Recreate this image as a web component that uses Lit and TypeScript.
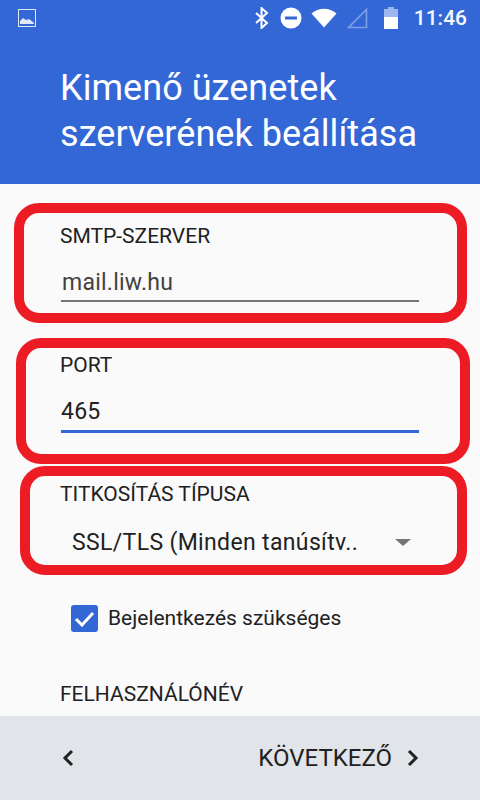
import { LitElement, html, css } from "lit";
import { customElement } from "lit/decorators.js";

@customElement("app-root")
export class AppRoot extends LitElement {
  static styles = css`
    :host { display: block; width: 480px; height: 800px; position: relative; overflow: hidden; background: #fafafa; font-family: Roboto, sans-serif; color: #212121; }
    .page { display: flex; flex-direction: column; height: 800px; }
    .header { height: 184px; box-sizing: border-box; background: #3367d6; color: #fff; display: flex; flex-direction: column; flex: none; }
    .status { height: 36px; display: flex; align-items: center; padding: 0 13px 0 18px; flex: none; }
    .status .spacer { flex: 1; }
    .status svg { display: block; flex: none; }
    .time { font-size: 21px; font-weight: 500; margin-left: 16px; color: #f5f7fd; }
    h1 { margin: 0; padding: 29px 0 0 60px; font-size: 36px; font-weight: 400; line-height: 46px; white-space: nowrap; letter-spacing: 0.05px; }
    .form { flex: 1; padding: 40px 60px 0 61px; min-height: 0; overflow: hidden; display: flex; flex-direction: column; }
    .label { font-size: 21px; line-height: 24px; color: #212121; height: 24px; white-space: nowrap; margin-left: -1px; }
    .value { font-size: 23px; line-height: 28px; height: 28px; padding-left: 1px; margin-top: 21px; color: #424242; letter-spacing: 0.25px; }
    .line { height: 2px; width: 358px; background: #757575; margin-top: 3px; }
    .port { margin-top: 51px; }
    .port .value { padding-left: 0; margin-top: 21px; color: #212121; font-size: 23px; }
    .port .line { height: 3px; background: #3367d6; margin-top: 4px; }
    .enc { margin-top: 49px; }
    .select { display: flex; align-items: center; margin: 18px 0 0 11px; height: 36px; font-size: 23px; color: #212121; letter-spacing: 0.35px; }
    .select span { flex: 1; white-space: nowrap; }
    .arrow { width: 0; height: 0; border-left: 8px solid transparent; border-right: 8px solid transparent; border-top: 7px solid #757575; margin-right: 9px; flex: none; }
    .check { display: flex; align-items: center; margin: 44px 0 0 10px; height: 28px; gap: 10px; font-size: 21px; color: #212121; white-space: nowrap; }
    .box { width: 27px; height: 27px; border-radius: 3px; background: #3367d6; display: flex; align-items: center; justify-content: center; flex: none; }
    .user { margin-top: 50px; }
    .footer { height: 84px; flex: none; background: #e1e4e8; display: flex; align-items: center; justify-content: space-between; padding: 0 61px 0 62px; font-size: 24px; color: #212121; }
    .next { display: flex; align-items: center; gap: 15px; }
    .footer svg { display: block; }
    .mark { position: absolute; box-sizing: border-box; border: 10px solid #ed1c24; pointer-events: none; }
    .m1 { left: 14px; top: 203px; width: 453px; height: 120px; border-radius: 25px; }
    .m2 { left: 16px; top: 338px; width: 454px; height: 126px; border-radius: 25px; }
    .m3 { left: 20px; top: 466px; width: 447px; height: 109px; border-radius: 25px; }
  `;

  render() {
    return html`
      <div class="page">
        <div class="header">
          <div class="status">
            <svg width="18" height="18" viewBox="0 0 18 18"><rect x="0.5" y="0.5" width="17" height="17" fill="none" stroke="#dfe7f9" stroke-width="1"/><path d="M2 15v-3l3-3 3 2 3-1 5 4v1z" fill="#dfe7f9"/></svg>
            <div class="spacer"></div>
            <svg width="16" height="22" viewBox="0 0 16 22"><path d="M2 6l11 10-5.5 5V1L13 6 2 16" fill="none" stroke="#fff" stroke-width="2"/></svg>
            <svg style="margin-left:10px" width="22" height="22" viewBox="0 0 22 22"><circle cx="11" cy="11" r="10.5" fill="#fff"/><rect x="5" y="9.5" width="12" height="3" fill="#3367d6"/></svg>
            <svg style="margin-left:9px" width="26" height="20" viewBox="0 0 26 20"><path d="M0.5 5.5C7.5 -0.8 18.5 -0.8 25.5 5.5L13 19.5z" fill="#fff"/></svg>
            <svg style="margin-left:9px" width="22" height="22" viewBox="0 0 22 22"><path d="M20.5 2.5V20.5H2.5z" fill="none" stroke="#7d9fe6" stroke-width="1.6"/></svg>
            <svg style="margin-left:16px" width="14" height="22" viewBox="0 0 14 22"><path d="M4 0h6v2h4v8H0V2h4z" fill="#9db8ee"/><rect x="0" y="10" width="14" height="12" fill="#fff"/></svg>
            <div class="time">11:46</div>
          </div>
          <h1>Kimenő üzenetek<br />szerverének beállítása</h1>
        </div>
        <div class="form">
          <div class="label">SMTP-SZERVER</div>
          <div class="value">mail.liw.hu</div>
          <div class="line"></div>
          <div class="port">
            <div class="label">PORT</div>
            <div class="value">465</div>
            <div class="line"></div>
          </div>
          <div class="enc">
            <div class="label">TITKOSÍTÁS TÍPUSA</div>
            <div class="select"><span>SSL/TLS (Minden tanúsítv..</span><div class="arrow"></div></div>
          </div>
          <div class="check">
            <div class="box"><svg width="21" height="17" viewBox="0 0 21 17"><path d="M2 9l6 6L19 3" fill="none" stroke="#fff" stroke-width="3"/></svg></div>
            <span>Bejelentkezés szükséges</span>
          </div>
          <div class="label user">FELHASZNÁLÓNÉV</div>
        </div>
        <div class="footer">
          <svg width="12" height="18" viewBox="0 0 12 18"><path d="M10 2L3 9l7 7" fill="none" stroke="#212121" stroke-width="3"/></svg>
          <div class="next">
            <span>KÖVETKEZŐ</span>
            <svg width="12" height="18" viewBox="0 0 12 18"><path d="M2 2l7 7-7 7" fill="none" stroke="#212121" stroke-width="3"/></svg>
          </div>
        </div>
      </div>
      <div class="mark m1"></div>
      <div class="mark m2"></div>
      <div class="mark m3"></div>
    `;
  }
}
